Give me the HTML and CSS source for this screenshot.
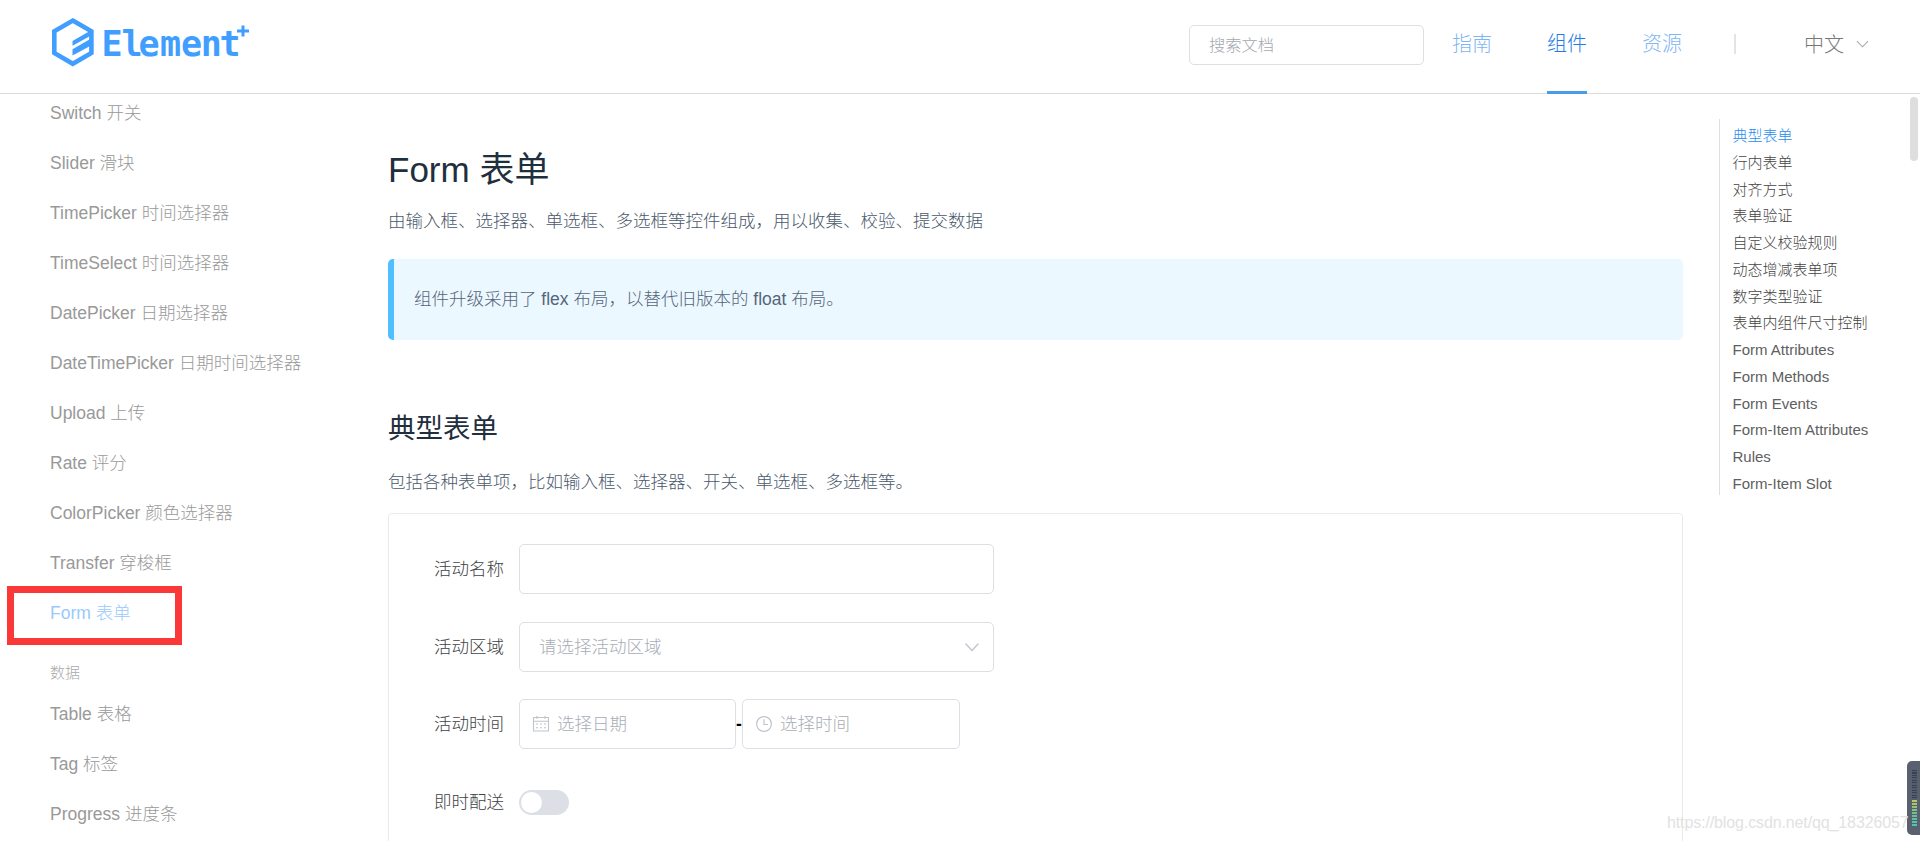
FILE: index.html
```html
<!DOCTYPE html>
<html lang="zh-CN">
<head>
<meta charset="utf-8">
<title>Form 表单 | Element Plus</title>
<link rel="stylesheet" href="styles.css">
</head>
<body>
<header class="header">
  <svg class="logo" width="204" height="54" viewBox="0 0 204 54">
    <path class="logo-frame" d="M22.8 6.6 L41.4 17.3 V39 L22.8 49.8 L4.3 39 V17.3 Z"/>
    <path class="logo-bars" d="M22.5 27 L42 15.8 V21 L22.5 31.8 Z M22.5 35.2 L42 24 V31 L22.5 41.6 Z"/>
    <text class="logo-text" y="42" x="62 82 99 120.5 141.5 161.3 180">Element</text>
    <path class="logo-plus" d="M187 17 H199 M193 11.4 V22.4"/>
  </svg>
  <div class="search">搜索文档</div>
  <nav class="nav">
    <a class="nav-link">指南</a>
    <a class="nav-link active">组件</a>
    <a class="nav-link">资源</a>
  </nav>
  <span class="divider"></span>
  <div class="lang">中文
    <svg width="13" height="8" viewBox="0 0 14 8"><path d="M1 1 L7 7 L13 1" fill="none" stroke="#aaa" stroke-width="1.2"/></svg>
  </div>
</header>
<div class="page">
  <aside class="sidebar">
    <a class="side-link">Switch 开关</a>
    <a class="side-link">Slider 滑块</a>
    <a class="side-link">TimePicker 时间选择器</a>
    <a class="side-link">TimeSelect 时间选择器</a>
    <a class="side-link">DatePicker 日期选择器</a>
    <a class="side-link">DateTimePicker 日期时间选择器</a>
    <a class="side-link">Upload 上传</a>
    <a class="side-link">Rate 评分</a>
    <a class="side-link">ColorPicker 颜色选择器</a>
    <a class="side-link">Transfer 穿梭框</a>
    <a class="side-link active">Form 表单<span class="highlight"></span></a>
    <div class="side-group">数据</div>
    <a class="side-link">Table 表格</a>
    <a class="side-link">Tag 标签</a>
    <a class="side-link">Progress 进度条</a>
  </aside>
  <main class="main">
    <h1 class="title">Form 表单</h1>
    <p class="text">由输入框、选择器、单选框、多选框等控件组成，用以收集、校验、提交数据</p>
    <div class="tip">组件升级采用了 flex 布局，以替代旧版本的 float 布局。</div>
    <h2 class="subtitle">典型表单</h2>
    <p class="text">包括各种表单项，比如输入框、选择器、开关、单选框、多选框等。</p>
    <section class="demo">
      <div class="row"><label class="label">活动名称</label><div class="field wide"></div></div>
      <div class="row"><label class="label">活动区域</label>
        <div class="field wide select"><span class="hint">请选择活动区域</span>
          <svg width="16" height="10" viewBox="0 0 16 10"><path d="M1.5 1.5 L8 8.5 L14.5 1.5" fill="none" stroke="#c0c4cc" stroke-width="1.3"/></svg>
        </div>
      </div>
      <div class="row"><label class="label">活动时间</label>
        <div class="field date">
          <svg width="18" height="18" viewBox="0 0 18 18" fill="none" stroke="#c0c4cc" stroke-width="1.1"><path d="M1.5 2.5 H16.5 V16 H1.5 Z M1.5 6.2 H16.5 M5 .8 V4 M13 .8 V4"/><path d="M4 9 H14 M4 12.7 H14" stroke-dasharray="2 2"/></svg>
          <span class="hint">选择日期</span>
        </div>
        <span class="dash">-</span>
        <div class="field time">
          <svg width="18" height="18" viewBox="0 0 18 18" fill="none" stroke="#c0c4cc" stroke-width="1.2"><circle cx="9" cy="9" r="7.4"/><path d="M9 4.2 V9.5 H13"/></svg>
          <span class="hint">选择时间</span>
        </div>
      </div>
      <div class="row last"><label class="label">即时配送</label><span class="switch"></span></div>
    </section>
  </main>
  <nav class="toc">
    <a class="toc-link active">典型表单</a>
    <a class="toc-link">行内表单</a>
    <a class="toc-link">对齐方式</a>
    <a class="toc-link">表单验证</a>
    <a class="toc-link">自定义校验规则</a>
    <a class="toc-link">动态增减表单项</a>
    <a class="toc-link">数字类型验证</a>
    <a class="toc-link">表单内组件尺寸控制</a>
    <a class="toc-link latin">Form Attributes</a>
    <a class="toc-link latin">Form Methods</a>
    <a class="toc-link latin">Form Events</a>
    <a class="toc-link latin">Form-Item Attributes</a>
    <a class="toc-link latin">Rules</a>
    <a class="toc-link latin">Form-Item Slot</a>
  </nav>
</div>
<span class="scrollbar"></span>
<span class="meter"><span class="meter-idle"></span><span class="meter-live"></span></span>
<span class="watermark">https://blog.csdn.net/qq_18326057</span>
</body>
</html>
```
FILE: styles.css
```css
* { box-sizing: border-box; }
body {
  margin: 0;
  height: 841px;
  overflow: hidden;
  position: relative;
  background: #fff;
  font-family: "Liberation Sans", "Noto Sans CJK SC", sans-serif;
  font-size: 17.5px;
  font-weight: 300;
}
.header {
  display: flex;
  height: 94px;
  padding: 0 51px 0 48px;
  border-bottom: 1px solid #dcdcdc;
}
.logo { margin: 14px auto 0 2px; overflow: visible; }
.logo-frame { fill: none; stroke: #409eff; stroke-width: 4.6; }
.logo-bars { fill: #409eff; }
.logo-plus { stroke: #409eff; stroke-width: 3; }
.logo-text {
  fill: #409eff;
  font: bold 35px "DejaVu Sans Mono", monospace;
  text-anchor: middle;
}
.search {
  width: 235px;
  height: 40px;
  margin: 25px 28px 0 0;
  padding-left: 19px;
  border: 1px solid #dcdfe6;
  border-radius: 5px;
  color: #a4a8b0;
  font-size: 16.25px;
  line-height: 38px;
}
.nav { display: flex; gap: 55px; }
.nav-link {
  width: 40px;
  height: 94px;
  font-size: 20px;
  line-height: 89px;
  color: #7eb5f5;
}
.nav-link.active { color: #1f7ce6; border-bottom: 3px solid #4a9bea; }
.divider { width: 2px; height: 20px; margin: 34px 68px 0 52px; background: #e4e4e4; }
.lang {
  display: flex;
  align-items: center;
  gap: 12px;
  height: 87px;
  font-size: 20px;
  color: #777;
}
.page { display: grid; grid-template-columns: 388px 1295px 1fr; height: 747px; }
.sidebar { padding: 0 0 0 50px; margin-top: -6px; }
.side-link {
  display: block;
  position: relative;
  height: 50px;
  line-height: 50px;
  color: #999;
  white-space: nowrap;
}
.side-link.active { color: #98cafc; }
.highlight {
  position: absolute;
  left: -43px;
  top: -2px;
  width: 175px;
  height: 59px;
  border: 7px solid #fb3838;
}
.side-group { height: 51px; padding-top: 20px; font-size: 15px; line-height: 30px; color: #aaa; }
.main { height: 747px; overflow: hidden; }
.title { margin: 51px 0 0; font-size: 35px; font-weight: 400; line-height: 50px; color: #1f2f3d; }
.text { margin: 11px 0 0; line-height: 30px; color: #4a586c; }
.tip {
  height: 81px;
  margin: 23px 0 0;
  padding-left: 20px;
  border-left: 6px solid #50bfff;
  border-radius: 5px;
  background: #ecf8ff;
  color: #56657a;
  line-height: 80px;
}
.subtitle { margin: 69px 0 0; font-size: 27.5px; font-weight: 400; line-height: 40px; color: #1f2f3d; }
.subtitle + .text { margin-top: 18px; }
.demo {
  display: flex;
  flex-direction: column;
  gap: 27.5px;
  height: 400px;
  margin-top: 16px;
  padding: 30px 0 0 30px;
  border: 1px solid #ebebeb;
  border-radius: 4px;
}
.row { display: flex; align-items: center; height: 50px; }
.last { padding-top: 1px; }
.label { width: 100px; padding: 0 15px 3px 0; text-align: right; color: #404246; }
.hint { padding-bottom: 3px; margin-left: -1px; }
.field {
  display: flex;
  align-items: center;
  height: 50px;
  border: 1px solid #dcdfe6;
  border-radius: 5px;
  color: #a8adb6;
}
.wide { width: 475px; }
.select { justify-content: space-between; padding: 0 13px 0 20px; }
.date, .time { width: 217px; padding-left: 12px; gap: 8px; }
.time { width: 218px; }
.dash { width: 6px; text-align: center; font-weight: 700; color: #000; }
.switch {
  width: 50px;
  height: 25px;
  padding: 2px;
  border-radius: 13px;
  background: #dcdfe6;
}
.switch::before { content: ""; display: block; width: 21px; height: 21px; border-radius: 50%; background: #fff; }
.toc {
  height: 376px;
  margin: 25px 0 0 36px;
  padding: 4px 0 0 12.5px;
  border-left: 1px solid #dcdfe6;
}
.toc-link { display: block; height: 26.75px; line-height: 26.75px; font-size: 15px; color: #444; white-space: nowrap; }
.toc-link.active { color: #2a8cf0; }
.toc-link.latin { color: #606060; }
.scrollbar { position: absolute; left: 1910px; top: 97px; width: 8px; height: 64px; border-radius: 4px; background: #dedede; }
.meter {
  position: absolute;
  left: 1907px;
  top: 761px;
  width: 13px;
  height: 74px;
  padding: 9px 3px 0 5px;
  border-radius: 5px 0 0 5px;
  background: #596070;
}
.meter-idle, .meter-live { display: block; height: 30px; background: repeating-linear-gradient(#394253 0 1px, #535c6c 1px 2.5px); }
.meter-live {
  height: 27px;
  background: repeating-linear-gradient(transparent 0 2px, #596070 2px 3px), linear-gradient(#c1c95a, #6bc08d 50%, #4cc5b5);
}
.watermark {
  position: absolute;
  left: 1667px;
  top: 812px;
  font-size: 16px;
  line-height: 22px;
  letter-spacing: -0.12px;
  color: #e2e2e2;
}
```
